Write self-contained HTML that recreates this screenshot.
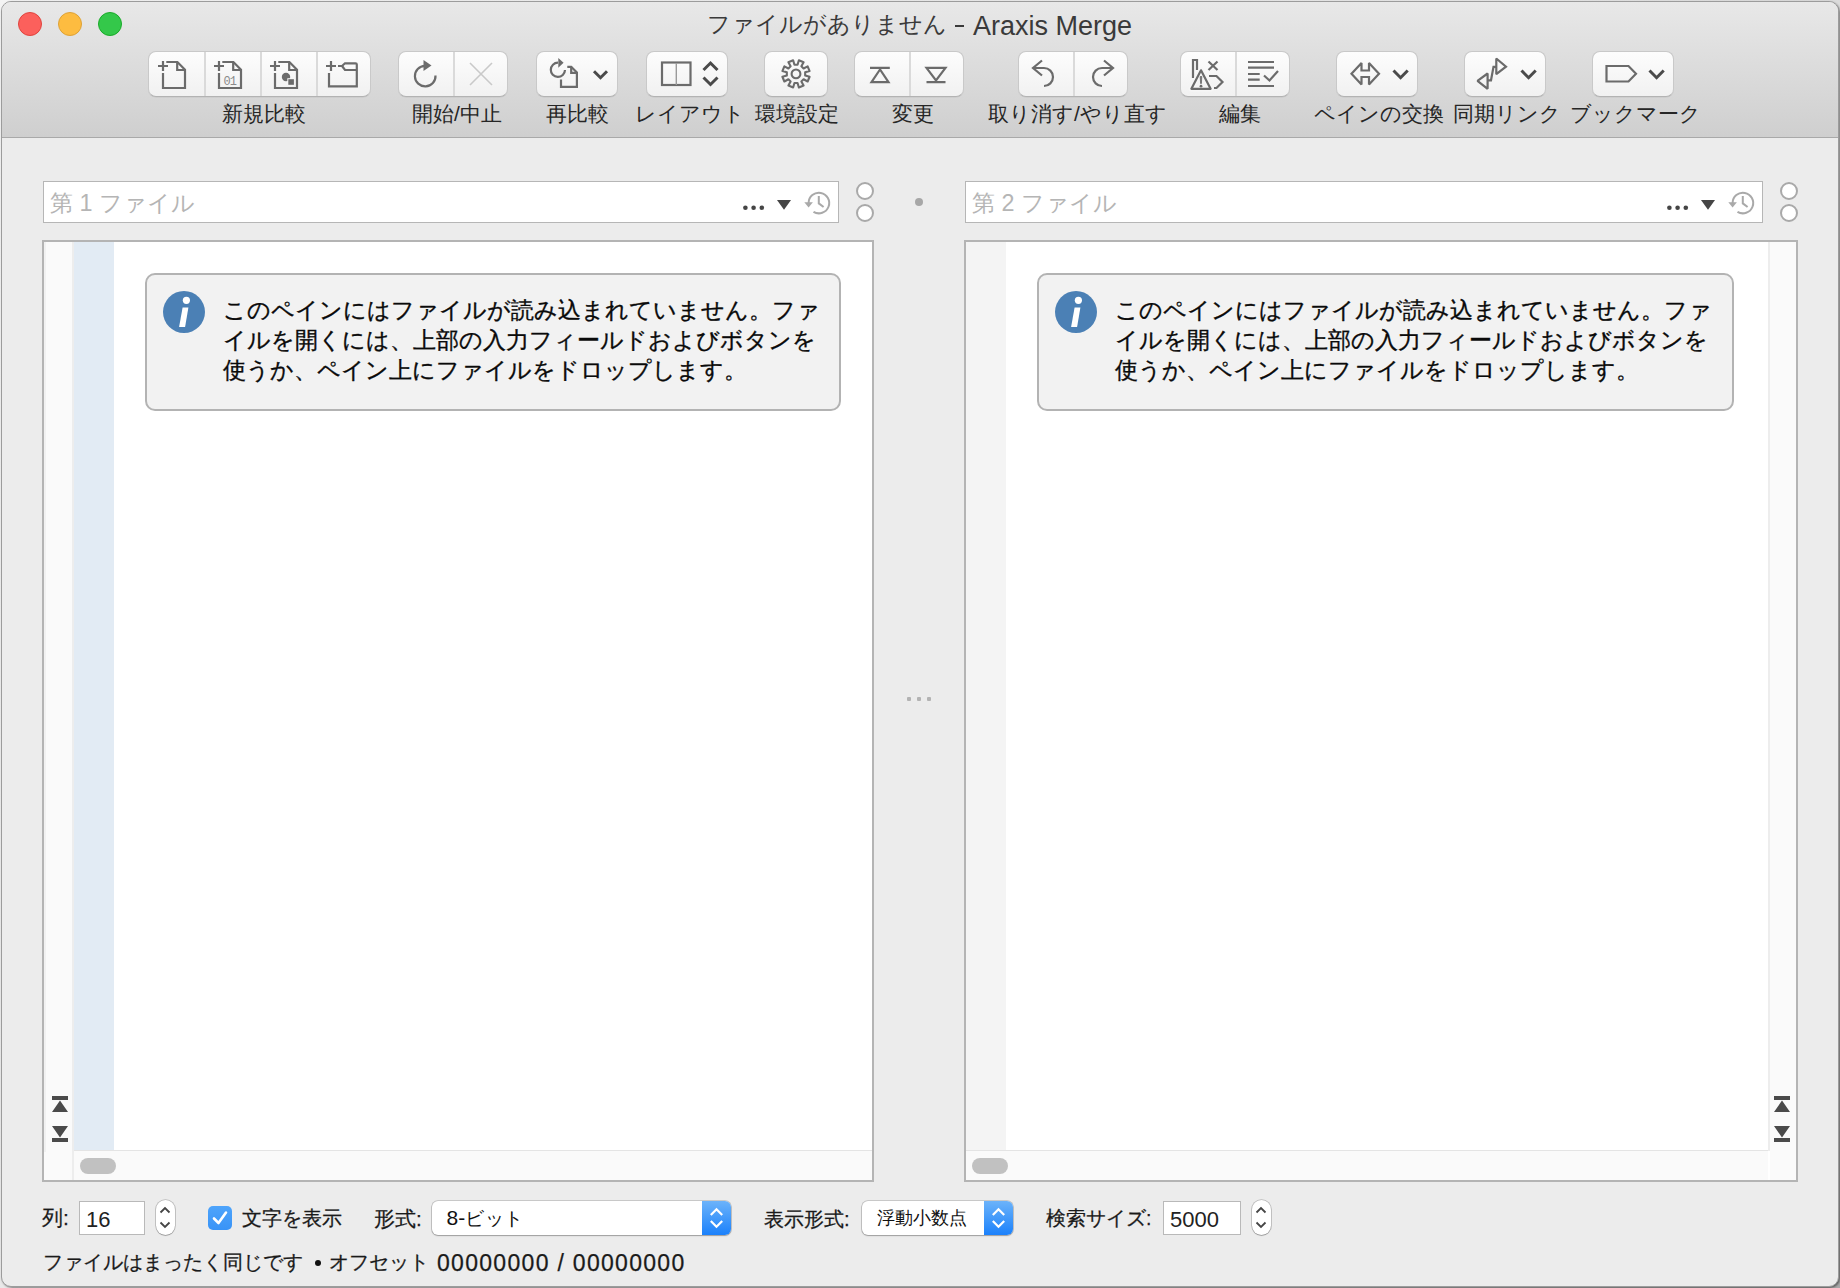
<!DOCTYPE html>
<html lang="ja">
<head>
<meta charset="utf-8">
<style>
*{box-sizing:border-box;margin:0;padding:0}
html,body{width:1840px;height:1288px;overflow:hidden;background:#d8d8d8}
body{font-family:"Liberation Sans",sans-serif;position:relative;color:#1a1a1a}
.abs{position:absolute}
#outside{position:absolute;left:0;top:0;width:1840px;height:1288px;background:linear-gradient(135deg,#f4f4f4 0%,#e6e6e6 50%,#a8a8a8 100%)}
#win{position:absolute;left:1px;top:1px;width:1838px;height:1286px;border-radius:10px;background:#ececec;border:1px solid #9c9c9c;box-shadow:1px 1px 2px rgba(0,0,0,.45)}
#bar{position:absolute;left:2px;top:2px;width:1836px;height:136px;border-radius:9px 9px 0 0;background:linear-gradient(#e8e8e8,#cfcfcf);border-bottom:1px solid #a9a9a9}
.light{position:absolute;width:24px;height:24px;border-radius:50%}
#title{position:absolute;left:0;top:9px;width:1840px;height:36px;font-size:25px;color:#3a3a3a;white-space:nowrap}
.grp{position:absolute;top:51px;height:46px;border-radius:8px;background:linear-gradient(#fdfdfd,#f1f1f1);border:1px solid #c9c9c9;border-bottom-color:#b3b3b3;box-shadow:0 0.5px 0.5px rgba(0,0,0,.08)}
.div{position:absolute;top:0;bottom:0;width:2px;background:#dadada}
.lbl{position:absolute;top:100px;font-size:21px;color:#262626;white-space:nowrap;text-align:center}
.ico{position:absolute}
.field{position:absolute;top:181px;height:42px;background:#fff;border:1px solid #b6b6b6}
.ph{position:absolute;top:186.5px;font-size:23.4px;color:#b5b5b5;white-space:nowrap;letter-spacing:0px}
.pane{position:absolute;top:240px;height:942px;border:2px solid #b4b4b4;background:#fff;overflow:hidden}
.info{position:absolute;top:273px;height:138px;border:2px solid #b3b3b3;border-radius:10px;background:#f2f2f2}
.itxt{position:absolute;top:295px;font-size:23px;line-height:30px;color:#0a0a0a;white-space:nowrap;-webkit-text-stroke:0.35px #0a0a0a}

.bl{position:absolute;top:1205px;font-size:21px;color:#1a1a1a;white-space:nowrap;-webkit-text-stroke:0.25px #1a1a1a}
.nf{position:absolute;top:1201px;height:34px;background:#fff;border:1px solid #b9b9b9;font-size:22px;padding-left:6px;line-height:35px;color:#222}
.step{position:absolute;top:1200px;width:19px;height:35px;border-radius:9.5px;background:#fff;box-shadow:0 0 0 0.8px rgba(0,0,0,.22),0 1px 1px rgba(0,0,0,.18)}
.pop{position:absolute;top:1201px;height:34px;border-radius:6px;background:#fff;box-shadow:0 0 0 0.8px rgba(0,0,0,.2),0 1px 1.5px rgba(0,0,0,.22);overflow:hidden}
.popb{position:absolute;top:0;right:0;width:29px;height:34px;background:linear-gradient(#6cb3fa,#1b81fb)}
.pt{position:absolute;top:0;left:15px;font-size:19px;line-height:34px;color:#111;white-space:nowrap}
.bar4{position:absolute;background:#4a4a4a}

</style>
</head>
<body>
<div id="outside"></div>
<div id="win"></div>
<div id="bar"></div>
<div class="light" style="left:18px;top:12px;background:#fc605c;border:1px solid #e0443e"></div>
<div class="light" style="left:58px;top:12px;background:#fdbc40;border:1px solid #dea236"></div>
<div class="light" style="left:98px;top:12px;background:#34c84a;border:1px solid #1aab29"></div>
<div id="title"><span style="position:absolute;left:706.5px;top:0px;font-size:23.2px">ファイルがありません</span><span style="position:absolute;left:955px;top:16px;width:9px;height:2.4px;background:#3a3a3a"></span><span style="position:absolute;left:973px;top:1.5px;font-size:27px">Araxis Merge</span></div>
<div class="grp" style="left:148px;width:223px"><div class="div" style="left:55px"></div><div class="div" style="left:111px"></div><div class="div" style="left:167px"></div></div>
<div class="grp" style="left:398px;width:110px"><div class="div" style="left:54px"></div></div>
<div class="grp" style="left:536px;width:82px"></div>
<div class="grp" style="left:646px;width:82px"></div>
<div class="grp" style="left:764px;width:64px"></div>
<div class="grp" style="left:854px;width:110px"><div class="div" style="left:54px"></div></div>
<div class="grp" style="left:1018px;width:110px"><div class="div" style="left:54px"></div></div>
<div class="grp" style="left:1180px;width:110px"><div class="div" style="left:54px"></div></div>
<div class="grp" style="left:1336px;width:82px"></div>
<div class="grp" style="left:1464px;width:82px"></div>
<div class="grp" style="left:1592px;width:82px"></div>
<div class="lbl" style="left:113.5px;width:300px">新規比較</div>
<div class="lbl" style="left:307.0px;width:300px">開始/中止</div>
<div class="lbl" style="left:427.0px;width:300px">再比較</div>
<div class="lbl" style="left:539.8px;width:300px">レイアウト</div>
<div class="lbl" style="left:646.7px;width:300px">環境設定</div>
<div class="lbl" style="left:763.2px;width:300px">変更</div>
<div class="lbl" style="left:927.5px;width:300px">取り消す/やり直す</div>
<div class="lbl" style="left:1089.5px;width:300px">編集</div>
<div class="lbl" style="left:1228.5px;width:300px">ペインの交換</div>
<div class="lbl" style="left:1357.4px;width:300px">同期リンク</div>
<div class="lbl" style="left:1485.3px;width:300px">ブックマーク</div>
<svg class="abs" style="left:0;top:0" width="1840" height="140" viewBox="0 0 1840 140" fill="none" stroke="#6b6b6b" stroke-width="2.2">
<!-- new doc -->
<g><path d="M158 66H168M163 61V71"/><path d="M166.3 62H177.4L185 69.6V88H163V73"/><path d="M177.2 62V70H185"/></g>
<g transform="translate(56 0)"><path d="M158 66H168M163 61V71"/><path d="M166.3 62H177.4L185 69.6V88H163V73"/><path d="M177.2 62V70H185"/></g>
<text x="223.5" y="84.5" font-family="Liberation Mono" font-size="12" fill="#8a8a8a" stroke="none" letter-spacing="-1">01</text>
<g transform="translate(112 0)"><path d="M158 66H168M163 61V71"/><path d="M166.3 62H177.4L185 69.6V88H163V73"/><path d="M177.2 62V70H185"/></g>
<circle cx="286" cy="77" r="4.2" fill="#6b6b6b" stroke="none"/>
<rect x="287.3" y="78.2" width="7.5" height="7.5" fill="#f5f5f5" stroke="none"/>
<rect x="288.3" y="79.2" width="5.6" height="5.6" fill="#6b6b6b" stroke="none"/>
<!-- folder -->
<path d="M326 66H336M331 61V71"/>
<path d="M338 66H342L345 63.3H355.5Q356.8 63.3 356.8 64.6V86.4H329V73"/>
<path d="M342 66L345 70H356.8"/>
<!-- refresh -->
<path d="M435.5 75.5A10.3 10.3 0 1 1 425 65.8"/>
<path d="M423.5 60L431.5 65.5L423.5 71Z" fill="#6b6b6b" stroke="none"/>
<path d="M470 63L492 85M492 63L470 85" stroke="#c9c9c9" stroke-width="1.6"/>
<!-- recompare -->
<path d="M565 70A7.1 7.1 0 1 1 558 62.7"/>
<path d="M558.3 57.9L563.6 62.8L558.3 67.8Z" fill="#6b6b6b" stroke="none"/>
<path d="M567.3 66.8H571.2L576.9 72.5V86.9H561V79.4"/><path d="M571.2 66.8V72.9H576.9"/>
<path d="M594 71.2L600.5 77.7L607 71.2" stroke="#4a4a4a" stroke-width="3"/>
<!-- layout -->
<rect x="662" y="62.5" width="28.5" height="22.5" stroke-width="2.2"/>
<path d="M676.3 63V85" stroke="#9a9a9a" stroke-width="1.4"/>
<path d="M703.5 70L710.5 63L717.5 70M703.5 77.5L710.5 84.5L717.5 77.5" stroke="#4a4a4a" stroke-width="3"/>
<!-- gear -->
<g transform="translate(796 73.9)" stroke-width="2.1">
<path d="M1.55 -9.17 L2.87 -13.60 L7.59 -11.64 L5.39 -7.58 L7.58 -5.39 L11.64 -7.59 L13.60 -2.87 L9.17 -1.55 L9.17 1.55 L13.60 2.87 L11.64 7.59 L7.58 5.39 L5.39 7.58 L7.59 11.64 L2.87 13.60 L1.55 9.17 L-1.55 9.17 L-2.87 13.60 L-7.59 11.64 L-5.39 7.58 L-7.58 5.39 L-11.64 7.59 L-13.60 2.87 L-9.17 1.55 L-9.17 -1.55 L-13.60 -2.87 L-11.64 -7.59 L-7.58 -5.39 L-5.39 -7.58 L-7.59 -11.64 L-2.87 -13.60 L-1.55 -9.17Z" stroke-linejoin="round"/>
<circle r="4.4"/>
</g>
<!-- change -->
<path d="M870 67.8H889.8M880 69.5L871.5 82.2H888.5Z"/>
<path d="M926.5 67.8H945.5L936 80.5ZM926.5 82.2H945.5"/>
<!-- undo/redo -->
<path d="M1042 60.5L1033 68L1042 75.5M1033 68H1044A9 9 0 0 1 1044 86"/>
<path d="M1104 60.5L1113 68L1104 75.5M1113 68H1102A9 9 0 0 0 1102 86"/>
<!-- edit -->
<path d="M1193 78V60H1197V70"/>
<path d="M1208.5 61.5L1217.5 70M1217.5 61.5L1208.5 70"/>
<path d="M1201 70.3L1210.6 88.8H1191.4Z" stroke-linejoin="round" stroke="#f6f6f6" stroke-width="5.5"/>
<path d="M1201 70.3L1210.6 88.8H1191.4Z" stroke-linejoin="round"/>
<path d="M1200.2 76.5H1201.8L1201.4 83.5H1200.6Z" fill="#6b6b6b" stroke-width="0.8"/>
<circle cx="1201" cy="86.2" r="1.4" fill="#6b6b6b" stroke="none"/>
<path d="M1209 76H1216.5L1222.5 82L1216.5 88H1214"/>
<path d="M1248 62H1274M1248 67.6H1274M1248 74H1259.7M1248 79.6H1259.7M1248 86H1274"/>
<path d="M1264 75.5L1269.5 80.5L1278 71"/>
<!-- swap -->
<path d="M1361.5 63V70.5H1369V63L1379 73.8L1369 84.5V77H1361.5V84.5L1351.5 73.8Z" stroke-miterlimit="1.5"/>
<path d="M1393.5 70.5L1400.6 77.7L1407.7 70.5" stroke="#4a4a4a" stroke-width="3"/>
<!-- sync link -->
<path d="M1487.6 73.5V88.8L1477.5 80.8Z M1487.6 80.3H1491L1493.5 66.8H1496.3 M1496.3 58.5V74.2L1506 66.6Z" stroke-miterlimit="1.6"/>
<path d="M1521.5 70.5L1528.6 77.7L1535.7 70.5" stroke="#4a4a4a" stroke-width="3"/>
<!-- bookmark -->
<path d="M1606.5 66H1628.5L1636 73.8L1628.5 81.5H1606.5Z"/>
<path d="M1649.5 70.5L1656.6 77.7L1663.7 70.5" stroke="#4a4a4a" stroke-width="3"/>
</svg>
<!-- LEFT PANE -->
<div class="field" style="left:43px;width:796px"></div>
<div class="ph" style="left:50px">第 1 ファイル</div>
<div class="field" style="left:965px;width:798px"></div>
<div class="ph" style="left:972px">第 2 ファイル</div>
<svg class="abs" style="left:0;top:170px" width="1840" height="60" viewBox="0 170 1840 60">
<g>
<circle cx="745.4" cy="207.7" r="2.3" fill="#454545"/><circle cx="753.6" cy="207.7" r="2.3" fill="#454545"/><circle cx="761.8" cy="207.7" r="2.3" fill="#454545"/>
<path d="M777 200H791L784 209.8Z" fill="#454545"/>
<path d="M808.6 203A10.3 10.3 0 1 1 813.5 211.8" fill="none" stroke="#a9a9a9" stroke-width="2"/>
<path d="M804.3 202.2H812.9L808.6 207.6Z" fill="#a9a9a9"/>
<path d="M818.8 196V203.4L823.6 207" fill="none" stroke="#a9a9a9" stroke-width="2"/>
</g>
<g transform="translate(924 0)">
<circle cx="745.4" cy="207.7" r="2.3" fill="#454545"/><circle cx="753.6" cy="207.7" r="2.3" fill="#454545"/><circle cx="761.8" cy="207.7" r="2.3" fill="#454545"/>
<path d="M777 200H791L784 209.8Z" fill="#454545"/>
<path d="M808.6 203A10.3 10.3 0 1 1 813.5 211.8" fill="none" stroke="#a9a9a9" stroke-width="2"/>
<path d="M804.3 202.2H812.9L808.6 207.6Z" fill="#a9a9a9"/>
<path d="M818.8 196V203.4L823.6 207" fill="none" stroke="#a9a9a9" stroke-width="2"/>
</g>
<g fill="#fff" stroke="#a9a9a9" stroke-width="2">
<circle cx="865" cy="191" r="8"/><circle cx="865" cy="213" r="8"/>
<circle cx="1789" cy="191" r="8"/><circle cx="1789" cy="213" r="8"/>
</g>
<circle cx="919" cy="202" r="4" fill="#a7a7a7"/>
</svg>
<div class="pane" style="left:42px;width:832px">
  <div class="abs" style="left:0;top:0;width:28px;height:938px;background:#fafafa"></div>
  <div class="abs" style="left:0;top:0;width:2px;height:910px;background:#f1f1f1"></div>
  <div class="abs" style="left:28px;top:0;width:2px;height:938px;background:#ededed"></div>
  <div class="abs" style="left:30px;top:0;width:40px;height:908px;background:#e2ebf4"></div>
  <div class="abs" style="left:30px;top:908px;width:798px;height:1px;background:#e4e4e4"></div>
  <div class="abs" style="left:30px;top:909px;width:798px;height:29px;background:#fafafa"></div>
  <div class="abs" style="left:36px;top:916px;width:36px;height:16px;border-radius:8px;background:#c1c1c1"></div>
  <div class="bar4" style="left:8px;top:854px;width:16px;height:4px"></div>
  <svg class="abs" style="left:8px;top:858px" width="16" height="42" viewBox="0 0 16 42"><path d="M0 12H16L8 0.5Z M0 26H16L8 37.5Z" fill="#4a4a4a"/></svg>
  <div class="bar4" style="left:8px;top:896px;width:16px;height:4px"></div>
</div>
<div class="pane" style="left:964px;width:834px">
  <div class="abs" style="left:0;top:0;width:40px;height:908px;background:#f4f4f4"></div>
  <div class="abs" style="left:0;top:908px;width:802px;height:1px;background:#e4e4e4"></div>
  <div class="abs" style="left:0;top:909px;width:802px;height:29px;background:#fafafa"></div>
  <div class="abs" style="left:802px;top:0;width:2px;height:909px;background:#ededed"></div>
  <div class="abs" style="left:804px;top:0;width:26px;height:938px;background:#fafafa"></div>
  <div class="abs" style="left:6px;top:916px;width:36px;height:16px;border-radius:8px;background:#c1c1c1"></div>
  <div class="bar4" style="left:808px;top:854px;width:16px;height:4px"></div>
  <svg class="abs" style="left:808px;top:858px" width="16" height="42" viewBox="0 0 16 42"><path d="M0 12H16L8 0.5Z M0 26H16L8 37.5Z" fill="#4a4a4a"/></svg>
  <div class="bar4" style="left:808px;top:896px;width:16px;height:4px"></div>
</div>
<div class="info" style="left:145px;width:696px"></div>
<div class="info" style="left:1037px;width:697px"></div>
<svg class="abs" style="left:0;top:280px" width="1840" height="70" viewBox="0 280 1840 70">
<g><circle cx="184" cy="312" r="21" fill="#4b80b5"/>
<circle cx="186.4" cy="300.3" r="3.6" fill="#fff"/>
<path d="M182.6 307.5H188.4L185.1 327H179.1Z" fill="#fff"/></g>
<g transform="translate(892 0)"><circle cx="184" cy="312" r="21" fill="#4b80b5"/>
<circle cx="186.4" cy="300.3" r="3.6" fill="#fff"/>
<path d="M182.6 307.5H188.4L185.1 327H179.1Z" fill="#fff"/></g>
</svg>
<div class="itxt" style="left:223px">このペインにはファイルが読み込まれていません。ファ<br>イルを開くには、上部の入力フィールドおよびボタンを<br>使うか、ペイン上にファイルをドロップします。</div>
<div class="itxt" style="left:1115px">このペインにはファイルが読み込まれていません。ファ<br>イルを開くには、上部の入力フィールドおよびボタンを<br>使うか、ペイン上にファイルをドロップします。</div>
<svg class="abs" style="left:900px;top:690px" width="40" height="16" viewBox="900 690 40 16"><g fill="#b3b3b3"><rect x="907" y="697" width="4" height="4" rx="1"/><rect x="917" y="697" width="4" height="4" rx="1"/><rect x="927" y="697" width="4" height="4" rx="1"/></g></svg>

<!-- BOTTOM -->
<div class="bl" style="left:42px;top:1204px">列:</div>
<div class="nf" style="left:79px;width:66px">16</div>
<div class="step" style="left:155.5px"><svg class="abs" style="left:3.5px;top:6px" width="12" height="23" viewBox="0 0 12 23"><path d="M1.5 6.5L6 2L10.5 6.5M1.5 16.5L6 21L10.5 16.5" fill="none" stroke="#454545" stroke-width="1.8"/></svg></div>
<div class="abs" style="left:208px;top:1206px;width:24px;height:24px;border-radius:5px;background:linear-gradient(#4ea4fb,#3893f7)"><svg width="24" height="24" viewBox="0 0 24 24"><path d="M6 12.5L10.5 17L18 6.5" fill="none" stroke="#fff" stroke-width="2.6" stroke-linecap="round" stroke-linejoin="round"/></svg></div>
<div class="bl" style="left:242px;font-size:20.1px">文字を表示</div>
<div class="bl" style="left:374px;font-size:20.6px">形式:</div>
<div class="pop" style="left:431.5px;width:299.5px"><div class="pt" style="font-size:21px">8-<span style="font-size:18.6px;letter-spacing:0.4px">ビット</span></div><div class="popb"><svg class="abs" style="left:7px;top:5px" width="15" height="24" viewBox="0 0 15 24"><path d="M1.8 9L7.5 3.3L13.2 9M1.8 15L7.5 20.7L13.2 15" fill="none" stroke="#fff" stroke-width="2.2"/></svg></div></div>
<div class="bl" style="left:764px;font-size:20.4px">表示形式:</div>
<div class="pop" style="left:861.5px;width:151.5px"><div class="pt" style="font-size:18.2px">浮動小数点</div><div class="popb"><svg class="abs" style="left:7px;top:5px" width="15" height="24" viewBox="0 0 15 24"><path d="M1.8 9L7.5 3.3L13.2 9M1.8 15L7.5 20.7L13.2 15" fill="none" stroke="#fff" stroke-width="2.2"/></svg></div></div>
<div class="bl" style="left:1046px;font-size:19.6px">検索サイズ:</div>
<div class="nf" style="left:1163px;width:78px;padding-left:6px">5000</div>
<div class="step" style="left:1251.5px"><svg class="abs" style="left:3.5px;top:6px" width="12" height="23" viewBox="0 0 12 23"><path d="M1.5 6.5L6 2L10.5 6.5M1.5 16.5L6 21L10.5 16.5" fill="none" stroke="#454545" stroke-width="1.8"/></svg></div>
<div class="bl" style="left:43px;top:1249px;font-size:20.1px">ファイルはまったく同じです</div>
<div class="abs" style="left:314.7px;top:1259.5px;width:6px;height:6px;border-radius:50%;background:#111"></div>
<div class="bl" style="left:329px;top:1249px;font-size:20.2px">オフセット</div>
<div class="bl" style="left:437px;top:1250px;font-size:23px;letter-spacing:1.3px">00000000 / 00000000</div>
</body>
</html>
